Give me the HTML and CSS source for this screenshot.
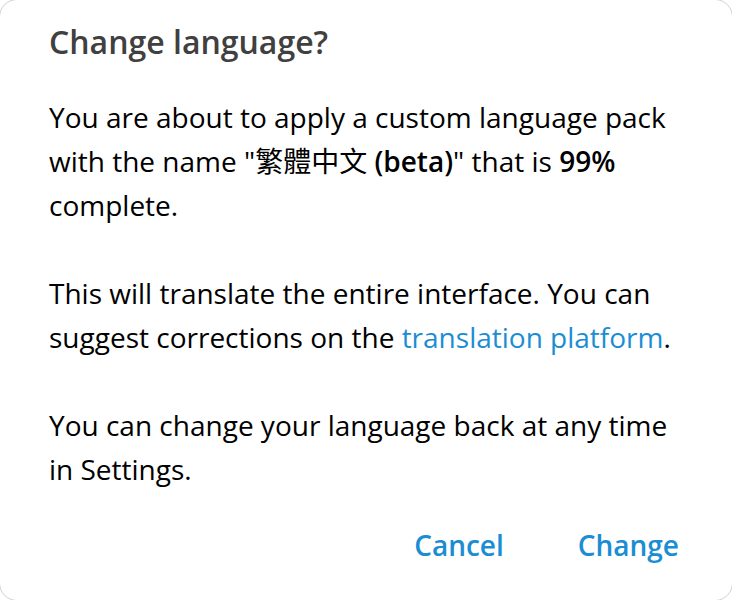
FILE: index.html
```html
<!DOCTYPE html>
<html lang="en">
<head>
<meta charset="utf-8">
<title>Change language?</title>
<link rel="stylesheet" href="styles.css">
</head>
<body>
<div class="dialog">
  <h1 class="title">Change language?</h1>
  <div class="content">
    <p class="para">You are about to apply a custom language pack with the name "繁體中文 <b>(beta)</b>" that is <b>99%</b> complete.</p>
    <p class="para">This will translate the entire interface. You can suggest corrections on the <a class="link" href="#">translation platform</a>.</p>
    <p class="para">You can change your language back at any time in Settings.</p>
  </div>
  <div class="actions">
    <button class="btn">Cancel</button>
    <button class="btn">Change</button>
  </div>
</div>
</body>
</html>
```

FILE: styles.css
```css
html, body {
  margin: 0;
  padding: 0;
  background: #ffffff;
  overflow: hidden;
}
.dialog {
  box-sizing: border-box;
  width: 734px;
  height: 602px;
  margin: -1px;
  border: 1px solid #d0d0d0;
  border-radius: 18px;
  background: #ffffff;
  padding: 22px 53px 0 49px;
  font-family: "Open Sans", "Noto Sans CJK TC", sans-serif;
  display: flex;
  flex-direction: column;
}
.title {
  margin: 0;
  font-size: 32px;
  line-height: 40px;
  font-weight: 600;
  color: #404040;
}
.content {
  margin-top: 33px;
  display: flex;
  flex-direction: column;
  gap: 44px;
}
.para {
  margin: 0;
  font-size: 28px;
  line-height: 44px;
  color: #000000;
}
.para b {
  font-weight: 600;
}
.link {
  color: #1a8dd3;
  text-decoration: none;
}
.actions {
  margin-top: 32px;
  display: flex;
  justify-content: flex-end;
  gap: 74px;
}
.btn {
  border: 0;
  background: none;
  padding: 0;
  font-family: "Open Sans", sans-serif;
  font-size: 28px;
  line-height: 44px;
  font-weight: 600;
  color: #1a8dd3;
  cursor: pointer;
}
```
